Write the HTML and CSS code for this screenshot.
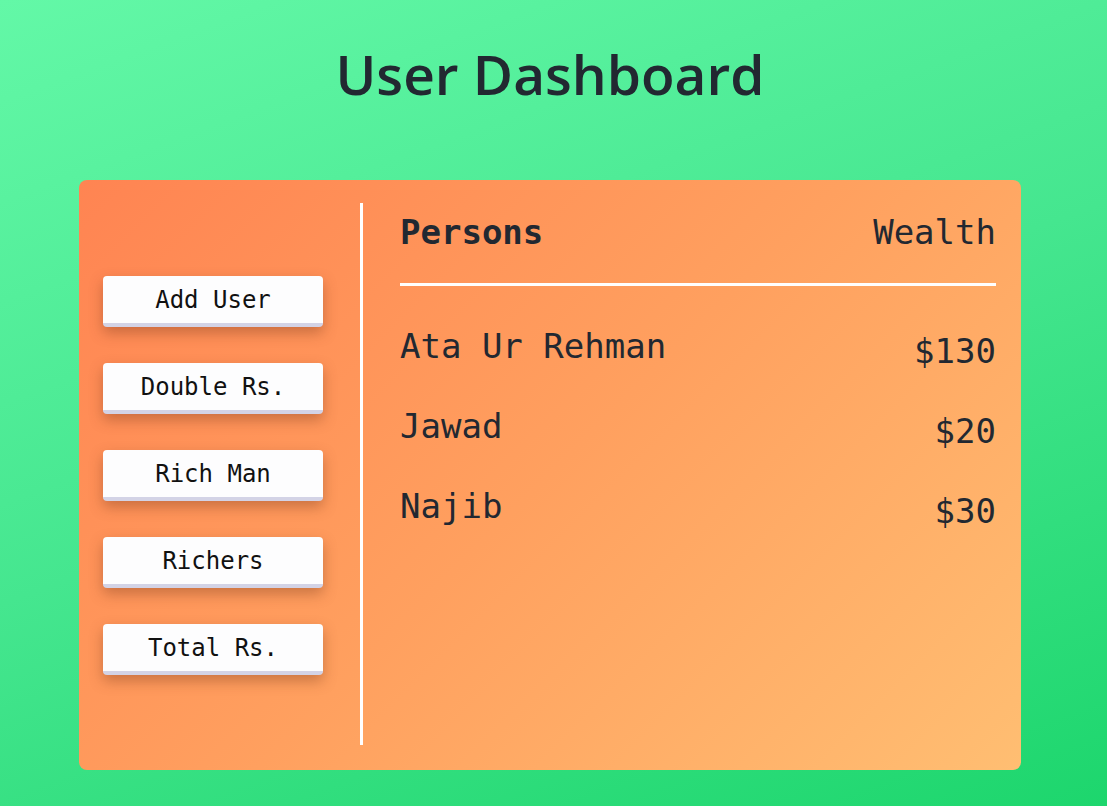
FILE: index.html
```html
<!DOCTYPE html>
<html>
<head>
<meta charset="utf-8">
<link rel="stylesheet" href="styles.css">
</head>
<body>
<h1 class="title">User Dashboard</h1>
<div class="card">
  <aside class="actions">
    <button class="btn">Add User</button>
    <button class="btn">Double Rs.</button>
    <button class="btn">Rich Man</button>
    <button class="btn">Richers</button>
    <button class="btn">Total Rs.</button>
  </aside>
  <main class="table">
    <div class="head">
      <span class="head-name">Persons</span>
      <span class="head-wealth">Wealth</span>
    </div>
    <div class="row"><span class="name">Ata Ur Rehman</span><span class="amount">$130</span></div>
    <div class="row"><span class="name">Jawad</span><span class="amount">$20</span></div>
    <div class="row"><span class="name">Najib</span><span class="amount">$30</span></div>
  </main>
</div>
</body>
</html>
```
FILE: styles.css
```css
* { box-sizing: border-box; }
html, body { height: 100%; }
body {
  margin: 0;
  background: linear-gradient(160deg, #63f8a7 0%, #45e68f 50%, #1dd66d 100%);
  font-family: "DejaVu Sans Mono", monospace;
  color: #222831;
  padding-top: 42px;
}
.title {
  margin: 0 0 74px;
  padding-right: 7px;
  text-align: center;
  font-family: "Open Sans", "Noto Sans", sans-serif;
  font-weight: 600;
  font-size: 55px;
  line-height: 64px;
  color: #222831;
}
.card {
  margin-left: 79px;
  width: 942px;
  height: 590px;
  border-radius: 8px;
  background: linear-gradient(135deg, #ff8452 0%, #ffa05f 50%, #ffbe72 100%);
  padding: 23px 25px 25px 24px;
  display: flex;
}
.actions {
  width: 260px;
  border-right: 3px solid #fff;
  display: flex;
  flex-direction: column;
  justify-content: center;
  gap: 36px;
  padding-top: 2px;
}
.btn {
  width: 220px;
  height: 51px;
  background: #fdfdfe;
  border: none;
  border-bottom: 4px solid #d3d3e6;
  border-radius: 4px;
  box-shadow: 0 6px 14px rgba(100, 45, 20, 0.35);
  font-family: "DejaVu Sans Mono", monospace;
  font-size: 24px;
  color: #111;
  padding: 0;
  padding-top: 2px;
}
.table {
  flex: 1;
  padding-left: 37px;
}
.head {
  display: flex;
  justify-content: space-between;
  font-size: 34px;
  padding-top: 9px;
  padding-bottom: 31px;
  border-bottom: 3px solid #fff;
}
.head-name { font-weight: bold; }
.row {
  display: flex;
  justify-content: space-between;
  font-size: 34px;
  height: 80px;
}
.head + .row { margin-top: 40px; }
.amount { padding-top: 5px; }
```
